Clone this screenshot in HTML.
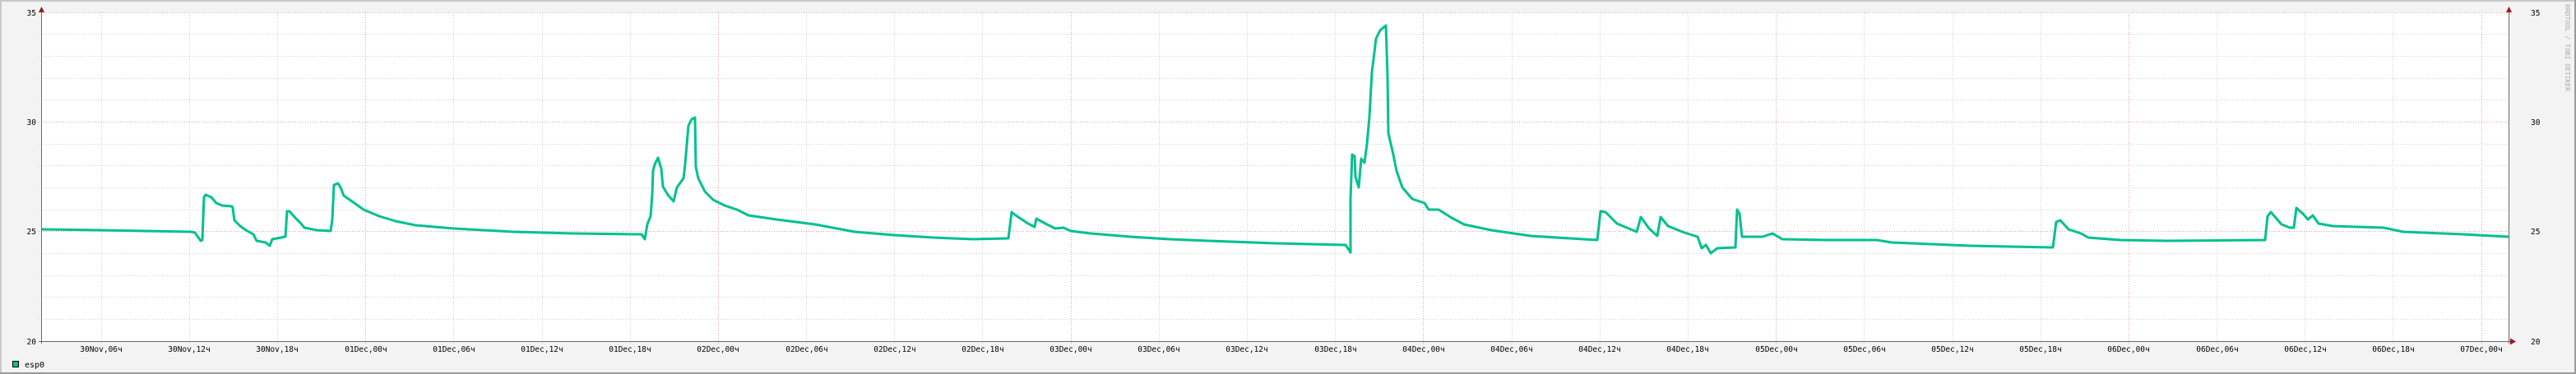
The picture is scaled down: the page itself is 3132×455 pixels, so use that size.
<!DOCTYPE html>
<html><head><meta charset="utf-8"><style>
html,body{margin:0;padding:0;background:#f3f3f3;}
svg{display:block;}
text{font-family:"DejaVu Sans Mono","Liberation Mono",monospace;font-size:9.5px;fill:#000;}
</style></head><body>
<svg width="3132" height="455" viewBox="0 0 3132 455" xmlns="http://www.w3.org/2000/svg">
<rect x="0" y="0" width="3132" height="455" fill="#f3f3f3"/>
<rect x="1" y="1" width="3130" height="453" fill="none" stroke="#c8c8c8" stroke-width="2"/>
<line x1="0" y1="454" x2="3132" y2="454" stroke="#9a9a9a" stroke-width="2"/>
<line x1="3131" y1="0" x2="3131" y2="455" stroke="#9a9a9a" stroke-width="2"/>
<rect x="50" y="15" width="3000" height="400" fill="#ffffff"/>
<g stroke="#d0d0d0" stroke-width="1" stroke-dasharray="1,2" shape-rendering="crispEdges">
<line x1="47" y1="41.5" x2="3053" y2="41.5"/><line x1="47" y1="68.5" x2="3053" y2="68.5"/>
<line x1="47" y1="95.5" x2="3053" y2="95.5"/><line x1="47" y1="121.5" x2="3053" y2="121.5"/>
<line x1="47" y1="175.5" x2="3053" y2="175.5"/><line x1="47" y1="201.5" x2="3053" y2="201.5"/>
<line x1="47" y1="228.5" x2="3053" y2="228.5"/><line x1="47" y1="255.5" x2="3053" y2="255.5"/>
<line x1="47" y1="308.5" x2="3053" y2="308.5"/><line x1="47" y1="335.5" x2="3053" y2="335.5"/>
<line x1="47" y1="361.5" x2="3053" y2="361.5"/><line x1="47" y1="388.5" x2="3053" y2="388.5"/>
<line x1="123.5" y1="15" x2="123.5" y2="418"/><line x1="230.5" y1="15" x2="230.5" y2="418"/>
<line x1="337.5" y1="15" x2="337.5" y2="418"/><line x1="551.5" y1="15" x2="551.5" y2="418"/>
<line x1="659.5" y1="15" x2="659.5" y2="418"/><line x1="766.5" y1="15" x2="766.5" y2="418"/>
<line x1="980.5" y1="15" x2="980.5" y2="418"/><line x1="1087.5" y1="15" x2="1087.5" y2="418"/>
<line x1="1194.5" y1="15" x2="1194.5" y2="418"/><line x1="1409.5" y1="15" x2="1409.5" y2="418"/>
<line x1="1516.5" y1="15" x2="1516.5" y2="418"/><line x1="1623.5" y1="15" x2="1623.5" y2="418"/>
<line x1="1838.5" y1="15" x2="1838.5" y2="418"/><line x1="1945.5" y1="15" x2="1945.5" y2="418"/>
<line x1="2052.5" y1="15" x2="2052.5" y2="418"/><line x1="2266.5" y1="15" x2="2266.5" y2="418"/>
<line x1="2374.5" y1="15" x2="2374.5" y2="418"/><line x1="2481.5" y1="15" x2="2481.5" y2="418"/>
<line x1="2695.5" y1="15" x2="2695.5" y2="418"/><line x1="2802.5" y1="15" x2="2802.5" y2="418"/>
<line x1="2909.5" y1="15" x2="2909.5" y2="418"/>
</g>
<g stroke="#e8a0a0" stroke-width="1" stroke-dasharray="1,2" shape-rendering="crispEdges">
<line x1="47" y1="15.5" x2="3053" y2="15.5"/><line x1="47" y1="148.5" x2="3053" y2="148.5"/>
<line x1="47" y1="281.5" x2="3053" y2="281.5"/>
<line x1="444.5" y1="15" x2="444.5" y2="418"/><line x1="873.5" y1="15" x2="873.5" y2="418"/>
<line x1="1302.5" y1="15" x2="1302.5" y2="418"/><line x1="1730.5" y1="15" x2="1730.5" y2="418"/>
<line x1="2159.5" y1="15" x2="2159.5" y2="418"/><line x1="2588.5" y1="15" x2="2588.5" y2="418"/>
<line x1="3017.5" y1="15" x2="3017.5" y2="418"/>
</g>
<polyline fill="none" stroke="#00c090" stroke-width="3" stroke-linejoin="round" points="
50,279 122,280 232,282 237,283 244,293 246,292 248,240 250,237 257,240 263,247 270,250 282,251 283,253 285,268 292,275 299,280 308,285 312,293 323,295 328,299 331,291 347,288 349,257 352,257 359,265 366,272 370,277 385,280 402,281 404,267 406,225 411,223 414,228 418,238 428,245 442,255 461,263 481,269 505,274 552,278 624,282 696,284 768,285 780,285 784,291 787,273 791,263 793,237 794,208 796,200 800,192
804,205 806,227 812,237 819,245 823,228 831,217 833,200 837,153 841,145 845,143 846,203 849,217 857,233 867,243 881,250 896,255 910,262 944,267 991,273 1039,282 1087,286 1135,289 1183,291 1226,290 1230,258 1235,262 1250,272 1258,276 1260,266 1271,272 1283,278 1293,277 1302,281 1326,284 1374,288 1422,291 1470,293 1550,296
1636,298 1642,307 1642,242 1644,188 1647,190 1648,215 1652,228 1655,193 1659,198 1662,175 1665,142 1668,88 1670,72 1673,47 1678,37 1685,31 1687,93 1688,162 1694,188 1698,208 1705,228 1717,242 1732,247 1737,255 1749,255 1765,265 1780,273 1813,280 1861,287 1909,290 1942,292 1946,257 1952,258 1966,272 1990,282 1995,264 2005,278 2015,287 2019,264 2028,275 2048,283 2064,288 2069,302 2074,298 2080,308 2088,302 2110,301 2112,255 2115,260 2118,288 2143,288 2155,284 2167,291 2220,292 2282,292 2300,295
2396,299 2444,300 2496,301 2500,270 2505,268 2515,279 2530,284 2539,289 2578,292 2635,293 2754,292 2757,263 2761,258 2767,265 2774,273 2784,277 2789,277 2792,253 2800,260 2806,267 2812,262 2819,272 2836,275 2898,277 2922,282 2994,285 3050,288"/>
<g stroke="#6a6a6a" stroke-width="1" shape-rendering="crispEdges">
<line x1="50.5" y1="12" x2="50.5" y2="418"/>
<line x1="47" y1="415.5" x2="3053" y2="415.5"/>
<line x1="3050.5" y1="12" x2="3050.5" y2="418"/>
</g>
<polygon points="47,15 54,15 50.5,8" fill="#9a1a1a"/>
<polygon points="3047,15 3054,15 3050.5,8" fill="#9a1a1a"/>
<polygon points="3052,411.5 3052,419.5 3059,415.5" fill="#9a1a1a"/>
<g text-anchor="end">
<text x="44" y="19">35</text><text x="44" y="152">30</text><text x="44" y="285">25</text><text x="44" y="419">20</text>
</g>
<g>
<text x="3077" y="19">35</text><text x="3077" y="152">30</text><text x="3077" y="285">25</text><text x="3077" y="419">20</text>
</g>
<g text-anchor="middle">
<text x="123" y="428">30Nov,06ч</text><text x="230" y="428">30Nov,12ч</text><text x="337" y="428">30Nov,18ч</text>
<text x="445" y="428">01Dec,00ч</text><text x="552" y="428">01Dec,06ч</text><text x="659" y="428">01Dec,12ч</text><text x="766" y="428">01Dec,18ч</text>
<text x="873" y="428">02Dec,00ч</text><text x="981" y="428">02Dec,06ч</text><text x="1088" y="428">02Dec,12ч</text><text x="1195" y="428">02Dec,18ч</text>
<text x="1302" y="428">03Dec,00ч</text><text x="1409" y="428">03Dec,06ч</text><text x="1516" y="428">03Dec,12ч</text><text x="1624" y="428">03Dec,18ч</text>
<text x="1731" y="428">04Dec,00ч</text><text x="1838" y="428">04Dec,06ч</text><text x="1945" y="428">04Dec,12ч</text><text x="2052" y="428">04Dec,18ч</text>
<text x="2160" y="428">05Dec,00ч</text><text x="2267" y="428">05Dec,06ч</text><text x="2374" y="428">05Dec,12ч</text><text x="2481" y="428">05Dec,18ч</text>
<text x="2588" y="428">06Dec,00ч</text><text x="2696" y="428">06Dec,06ч</text><text x="2803" y="428">06Dec,12ч</text><text x="2910" y="428">06Dec,18ч</text>
<text x="3017" y="428">07Dec,00ч</text>
</g>
<rect x="15.5" y="439.5" width="7" height="7" fill="#00c090" stroke="#000" stroke-width="1"/>
<text x="30" y="447" style="font-size:10px">esp0</text>
<text transform="translate(3119,5) rotate(90)" style="font-size:8px;fill:#aaaaaa">RRDTOOL / TOBI OETIKER</text>
</svg>
</body></html>
